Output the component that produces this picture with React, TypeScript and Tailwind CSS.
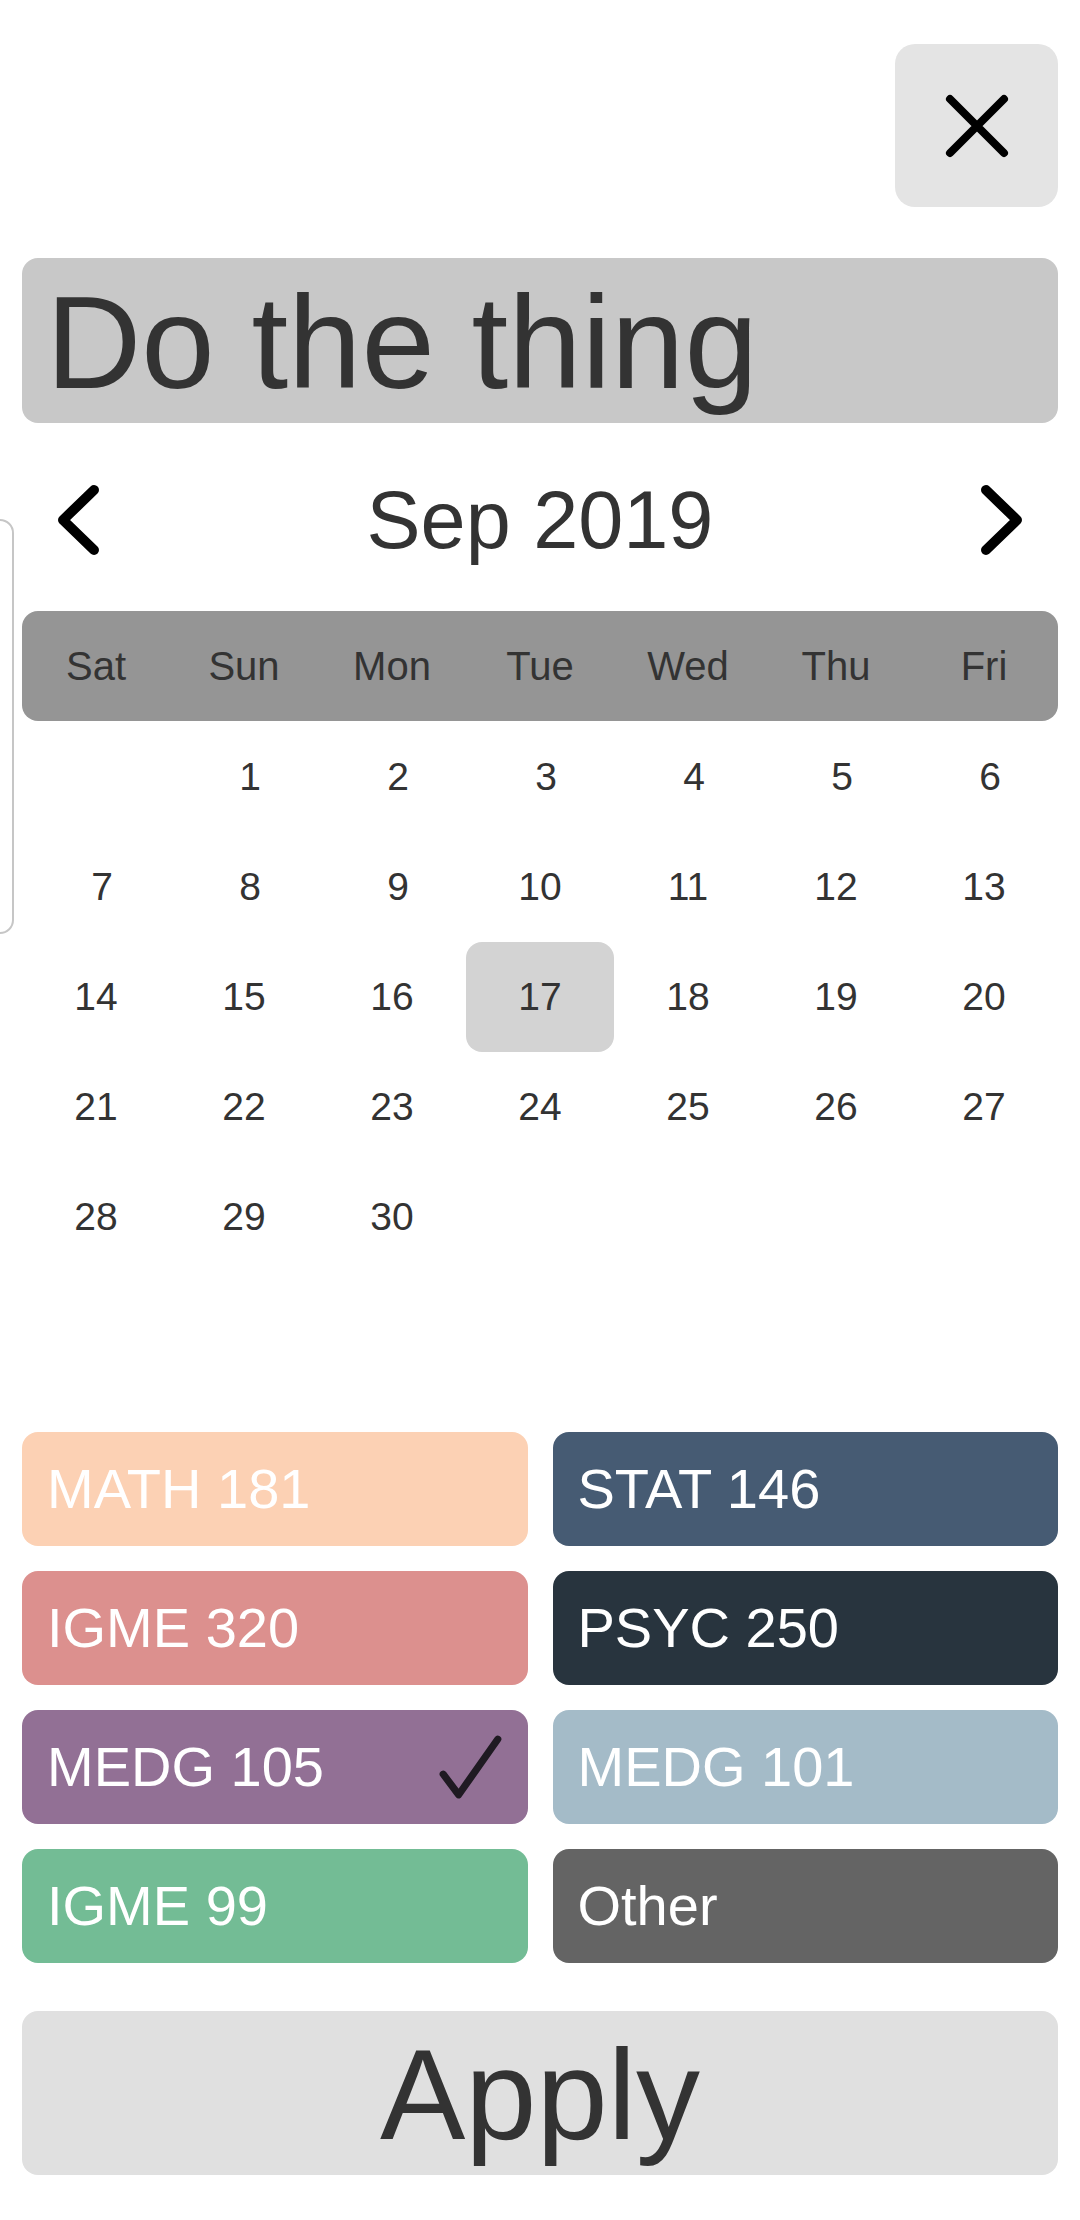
import React from "react";

const days = ["Sat", "Sun", "Mon", "Tue", "Wed", "Thu", "Fri"];

const courses: { name: string; bg: string; checked?: boolean }[] = [
  { name: "MATH 181", bg: "bg-[#fcd1b4]" },
  { name: "STAT 146", bg: "bg-[#465b73]" },
  { name: "IGME 320", bg: "bg-[#dc908e]" },
  { name: "PSYC 250", bg: "bg-[#28343e]" },
  { name: "MEDG 105", bg: "bg-[#927095]", checked: true },
  { name: "MEDG 101", bg: "bg-[#a4bbc8]" },
  { name: "IGME 99", bg: "bg-[#73bc95]" },
  { name: "Other", bg: "bg-[#646464]" },
];

export default function App() {
  const cells: (number | null)[] = [null];
  for (let i = 1; i <= 30; i++) cells.push(i);
  while (cells.length < 35) cells.push(null);

  return (
    <div
      className="relative w-[1080px] min-h-[2220px] bg-white px-[22px] pt-[44px] overflow-hidden"
      style={{ fontFamily: '"Liberation Sans", Arial, sans-serif' }}
    >
      {/* off-screen panel edge */}
      <div className="absolute left-[-24px] top-[519px] w-[38px] h-[415px] border-2 border-[#c6c6c6] rounded-[14px]" />

      {/* close button */}
      <div className="flex justify-end">
        <button className="w-[163px] h-[163px] rounded-[20px] bg-[#e4e4e4] flex items-center justify-center">
          <svg width="70" height="70" viewBox="0 0 70 70">
            <path d="M8 8 L62 62 M62 8 L8 62" stroke="#000" strokeWidth="8" strokeLinecap="round" fill="none" />
          </svg>
        </button>
      </div>

      {/* title */}
      <div className="mt-[51px] h-[165px] rounded-[16px] bg-[#c8c8c8] flex items-center pl-[24px] pt-[4px]">
        <span className="text-[132px] leading-none text-[#333333]">Do the thing</span>
      </div>

      {/* month header */}
      <div className="mt-[42px] h-[110px] flex items-center justify-between px-[30px]">
        <svg width="60" height="80" viewBox="0 0 60 80">
          <path d="M42 10 L11 40 L42 70" stroke="#000" strokeWidth="10" strokeLinecap="round" strokeLinejoin="round" fill="none" />
        </svg>
        <span className="text-[81px] leading-none text-[#333333]">Sep 2019</span>
        <svg width="60" height="80" viewBox="0 0 60 80">
          <path d="M18 10 L49 40 L18 70" stroke="#000" strokeWidth="10" strokeLinecap="round" strokeLinejoin="round" fill="none" />
        </svg>
      </div>

      {/* weekday bar */}
      <div className="mt-[36px] h-[110px] rounded-[16px] bg-[#959595] grid grid-cols-7">
        {days.map((d) => (
          <div key={d} className="flex items-center justify-center text-[40px] text-[#333333]">
            {d}
          </div>
        ))}
      </div>

      {/* dates */}
      <div className="grid grid-cols-7 pt-[1px]">
        {cells.map((c, i) => (
          <div
            key={i}
            className={`h-[110px] flex items-center justify-center text-[39px] text-[#333333] ${
              c === 17 ? "bg-[#d3d3d3] rounded-[16px]" : ""
            } ${c !== null && c < 10 ? "pl-[12px]" : ""}`}
          >
            {c ?? ""}
          </div>
        ))}
      </div>

      {/* courses */}
      <div className="mt-[160px] grid grid-cols-2 gap-x-[25px] gap-y-[25px]">
        {courses.map((c) => (
          <div
            key={c.name}
            className={`relative h-[114px] rounded-[16px] ${c.bg} flex items-center pl-[25px] text-[56px] text-white`}
          >
            <span className="leading-none">{c.name}</span>
            {c.checked && (
              <svg className="absolute right-[21px] top-[21px]" width="72" height="72" viewBox="0 0 70 70">
                <path d="M8 42 L23 62 L61 8" stroke="#1f1a22" strokeWidth="7" strokeLinecap="round" strokeLinejoin="round" fill="none" />
              </svg>
            )}
          </div>
        ))}
      </div>

      {/* apply */}
      <button className="mt-[48px] w-full h-[164px] rounded-[16px] bg-[#e0e0e0] flex items-center justify-center pt-[4px]">
        <span className="text-[128px] leading-none text-[#333333]">Apply</span>
      </button>
    </div>
  );
}
